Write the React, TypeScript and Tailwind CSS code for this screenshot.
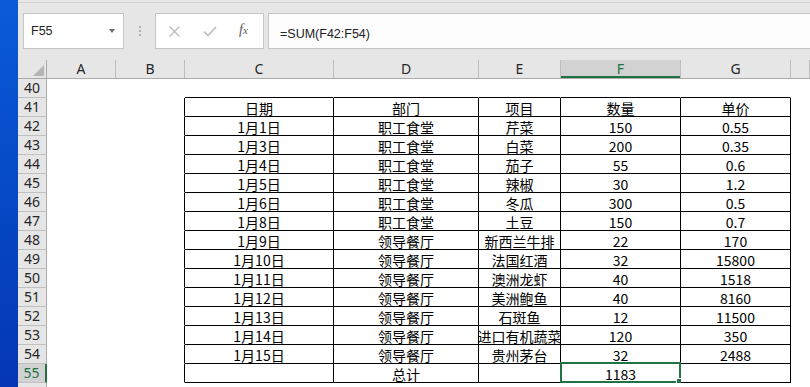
import React from 'react';

const grid = 'grid grid-cols-[29px_69px_69px_149px_145px_82px_120px_110px_1fr]';
const letters = ['A', 'B', 'C', 'D', 'E', 'F', 'G', ''];

// rows 41..55, columns C..G
const data: Record<number, string[]> = {
  41: ['日期', '部门', '项目', '数量', '单价'],
  42: ['1月1日', '职工食堂', '芹菜', '150', '0.55'],
  43: ['1月3日', '职工食堂', '白菜', '200', '0.35'],
  44: ['1月4日', '职工食堂', '茄子', '55', '0.6'],
  45: ['1月5日', '职工食堂', '辣椒', '30', '1.2'],
  46: ['1月6日', '职工食堂', '冬瓜', '300', '0.5'],
  47: ['1月8日', '职工食堂', '土豆', '150', '0.7'],
  48: ['1月9日', '领导餐厅', '新西兰牛排', '22', '170'],
  49: ['1月10日', '领导餐厅', '法国红酒', '32', '15800'],
  50: ['1月11日', '领导餐厅', '澳洲龙虾', '40', '1518'],
  51: ['1月12日', '领导餐厅', '美洲鲍鱼', '40', '8160'],
  52: ['1月13日', '领导餐厅', '石斑鱼', '12', '11500'],
  53: ['1月14日', '领导餐厅', '进口有机蔬菜', '120', '350'],
  54: ['1月15日', '领导餐厅', '贵州茅台', '32', '2488'],
  55: ['', '总计', '', '1183', ''],
};

const rows = Array.from({ length: 17 }, (_, i) => 40 + i);

function Toolbar() {
  return (
    <div className="h-[60px] bg-[#e6e6e6] shrink-0">
      <div className="h-[3px] border-b border-[#d2d2d2]" />
      <div className="flex mt-[10px] h-[36px]">
        {/* Name box */}
        <div className="ml-[5px] w-[101px] h-full border border-[#c6c6c6] bg-white flex items-center justify-between pl-[7px] pr-[8px]">
          <span className="text-[12.5px] text-[#222] font-['Liberation_Sans',sans-serif]">F55</span>
          <span className="w-0 h-0 border-l-[3.5px] border-r-[3.5px] border-t-[4px] border-l-transparent border-r-transparent border-t-[#6a6a6a]" />
        </div>
        <div className="w-[31px] flex flex-col items-center justify-center gap-[2px]">
          <span className="w-[2px] h-[2px] bg-[#b3b3b3]" />
          <span className="w-[2px] h-[2px] bg-[#b3b3b3]" />
          <span className="w-[2px] h-[2px] bg-[#b3b3b3]" />
        </div>
        {/* Cancel / enter / function */}
        <div className="w-[109px] h-full border border-[#c6c6c6] bg-white relative flex items-center">
          <svg className="absolute left-[13px] top-[12px]" width="11" height="11" viewBox="0 0 11 11">
            <path d="M0.5 0.5 L10.5 10.5 M10.5 0.5 L0.5 10.5" stroke="#bcbcbc" strokeWidth="1.3" fill="none" />
          </svg>
          <svg className="absolute left-[47px] top-[12px]" width="14" height="11" viewBox="0 0 14 11">
            <path d="M1 5.5 L5 9.5 L13 1" stroke="#bcbcbc" strokeWidth="1.6" fill="none" />
          </svg>
          <span className="absolute left-[83px] top-[9px] font-['Liberation_Serif',serif] italic text-[#595959] text-[14px] leading-[14px]">
            f<span className="text-[11px]">x</span>
          </span>
        </div>
        {/* Formula bar */}
        <div className="ml-[4px] flex-1 h-full border border-r-0 border-[#c6c6c6] bg-[#fdfdfd] pl-[11px] pt-[6px]">
          <span className="text-[12.5px] leading-[16px] text-[#222] font-['Liberation_Sans',sans-serif]">=SUM(F42:F54)</span>
        </div>
      </div>
    </div>
  );
}

function ColumnHeader() {
  return (
    <div className={`${grid} h-[19px] bg-[#e6e6e6] border-b border-[#ababab] shrink-0`}>
      <div className="relative border-r border-[#ababab]">
        <svg className="absolute right-[2px] bottom-[2px]" width="11" height="11" viewBox="0 0 11 11">
          <path d="M11 0 L11 11 L0 11 Z" fill="#b4b4b4" />
        </svg>
      </div>
      {letters.map((l, i) => {
        const sel = l === 'F';
        return (
          <div
            key={i}
            className={
              sel
                ? 'bg-[#d2d2d2] border-r border-[#bdbdbd] shadow-[inset_0_-2px_0_#217346] flex justify-center text-[#217346] text-[14px] leading-[18px] font-["Noto_Sans",sans-serif]'
                : 'border-r border-[#bdbdbd] flex justify-center text-[#262626] text-[14px] leading-[18px] font-["Noto_Sans",sans-serif]'
            }
          >
            {l}
          </div>
        );
      })}
    </div>
  );
}

function Sheet() {
  return (
    <div className="flex-1 bg-white">
      {rows.map((r) => {
        const vals = data[r];
        return (
          <div key={r} className={`${grid} h-[19px]`}>
            <div
              className={
                r === 55
                  ? 'bg-[#d2d2d2] border-b border-[#c0c0c0] border-r-2 border-r-[#217346] flex justify-center text-[#217346] text-[14px] leading-[18px] font-["Noto_Sans",sans-serif]'
                  : 'bg-[#e6e6e6] border-b border-[#c0c0c0] border-r border-r-[#ababab] flex justify-center text-[#262626] text-[14px] leading-[18px] font-["Noto_Sans",sans-serif]'
              }
            >
              {r < 56 ? r : ''}
            </div>
            <div className="border-r border-b border-transparent" />
            <div className={`border-b border-transparent border-r ${vals ? 'border-r-black' : 'border-r-transparent'}`} />
            {[0, 1, 2, 3, 4].map((c) => {
              const inTable = !!vals;
              const topEdge = r === 40;
              const selected = r === 55 && c === 3;
              return (
                <div
                  key={c}
                  className={`relative flex justify-center whitespace-nowrap overflow-visible pt-[2px] text-[14px] leading-[16px] text-black font-['Noto_Sans_CJK_SC',sans-serif] border-r border-b ${
                    inTable ? 'border-black' : topEdge ? 'border-r-transparent border-b-black' : 'border-transparent'
                  }`}
                >
                  {vals ? vals[c] : ''}
                  {selected && (
                    <div className="absolute -left-[1px] -top-[2px] -right-[1px] -bottom-[1px] border-2 border-[#217346]">
                      <div className="absolute -right-[3px] -bottom-[3px] w-[6px] h-[6px] bg-[#217346] border border-white" />
                    </div>
                  )}
                </div>
              );
            })}
            <div className="border-b border-transparent" />
          </div>
        );
      })}
    </div>
  );
}

export default function App() {
  return (
    <div className="w-[810px] h-[387px] overflow-hidden flex bg-white">
      <div className="w-[18px] shrink-0 bg-gradient-to-b from-[#0b5bd9] to-[#0536b3]" />
      <div className="flex-1 flex flex-col overflow-hidden">
        <Toolbar />
        <ColumnHeader />
        <Sheet />
      </div>
    </div>
  );
}
